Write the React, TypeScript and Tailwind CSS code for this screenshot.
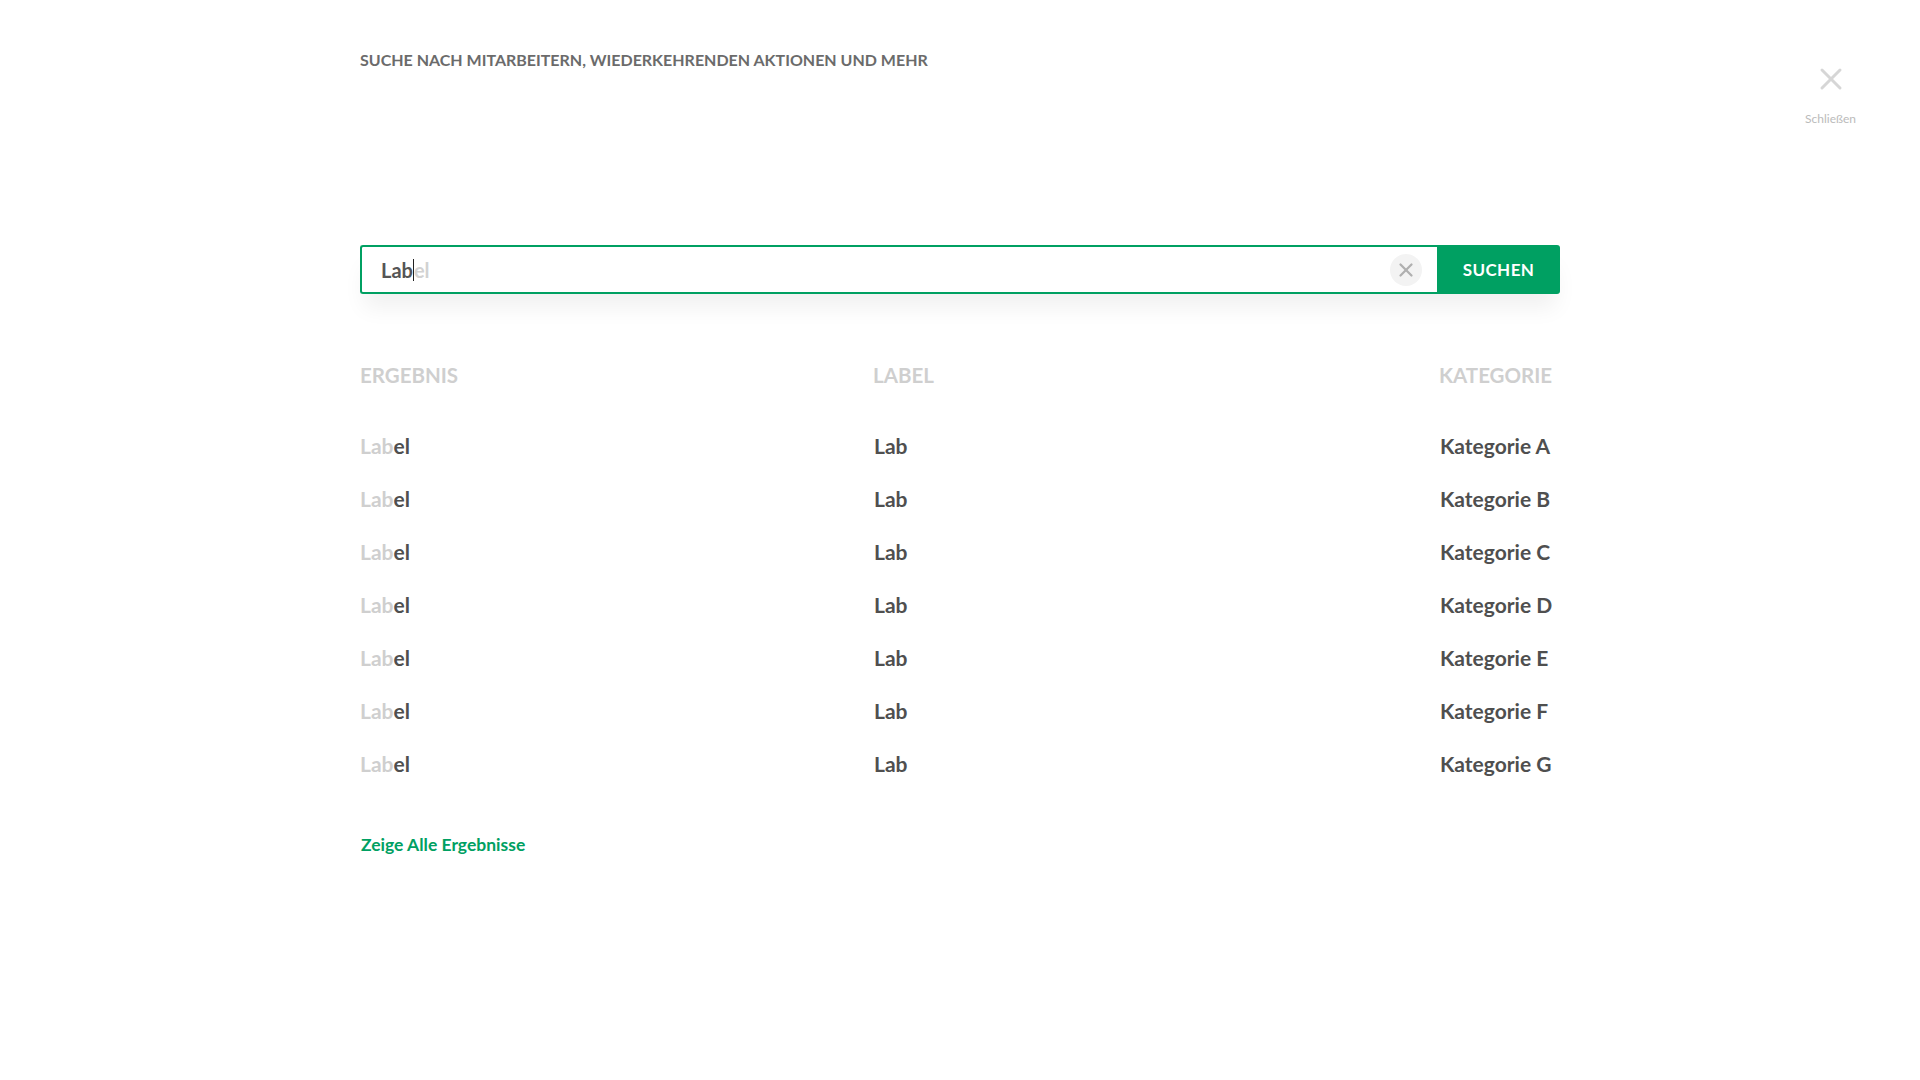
import { X } from "lucide-react";

const rows = ["A", "B", "C", "D", "E", "F", "G"];

function ClearButton() {
  return (
    <button className="mr-[15px] flex h-8 w-8 items-center justify-center rounded-full bg-[#f3f3f3] text-[#b0b0b0]">
      <X size={22} strokeWidth={2.5} />
    </button>
  );
}

export default function App() {
  return (
    <div
      className="flex min-h-screen w-full bg-white text-[#555]"
      style={{ fontFamily: "Lato, 'Open Sans', sans-serif" }}
    >
      <div className="ml-[360px] flex w-[1200px] flex-col">
        {/* Title */}
        <h1 className="pt-[48px] text-[16px] font-bold uppercase leading-6 text-[#6b6b6b]">
          Suche nach Mitarbeitern, wiederkehrenden Aktionen und mehr
        </h1>

        {/* Search bar */}
        <div className="mt-[173px] flex h-[49px] shadow-[0_18px_22px_-4px_rgba(0,0,0,0.06)]">
          <div className="flex flex-1 items-center rounded-l-[3px] border-2 border-r-0 border-[#00a062] bg-white pl-[19px]">
            <div className="flex flex-1 items-center text-[20px]">
              <span className="font-bold text-[#555]">Lab</span>
              <span className="h-[22px] w-px bg-[#222]" />
              <span className="font-bold text-[#d2d2d2]">el</span>
            </div>
            <ClearButton />
          </div>
          <button className="w-[123px] rounded-r-[3px] bg-[#00a062] text-[17px] font-bold uppercase tracking-wide text-white">
            Suchen
          </button>
        </div>

        {/* Results table */}
        <div className="mt-[67px] grid grid-cols-[513px_1fr_121px] text-[20.5px] leading-7">
          <div className="font-bold uppercase text-[#cfcfcf]">Ergebnis</div>
          <div className="font-bold uppercase text-[#cfcfcf]">Label</div>
          <div className="font-bold uppercase text-[#cfcfcf]">Kategorie</div>
        </div>

        <div className="mt-[30px] flex flex-col">
          {rows.map((r) => (
            <div
              key={r}
              className="grid h-[53px] grid-cols-[513px_1fr_121px] items-center text-[21px] font-bold"
            >
              <div>
                <span className="text-[#cfcfcf]">Lab</span>
                <span className="text-[#4f4f4f]">el</span>
              </div>
              <div className="pl-px text-[#4f4f4f]">Lab</div>
              <div className="pl-px text-[#4f4f4f]">Kategorie {r}</div>
            </div>
          ))}
        </div>

        <a href="#" className="mt-[43px] pl-px text-[17.5px] font-bold leading-6 text-[#00a062]">
          Zeige Alle Ergebnisse
        </a>
      </div>

      {/* Close */}
      <div className="ml-auto mr-[64px] flex flex-col items-center pt-[61px] text-[#d6d6d6]">
        <X size={36} strokeWidth={2} />
        <span className="mt-[13px] text-[12px] text-[#bbb]">Schließen</span>
      </div>
    </div>
  );
}
